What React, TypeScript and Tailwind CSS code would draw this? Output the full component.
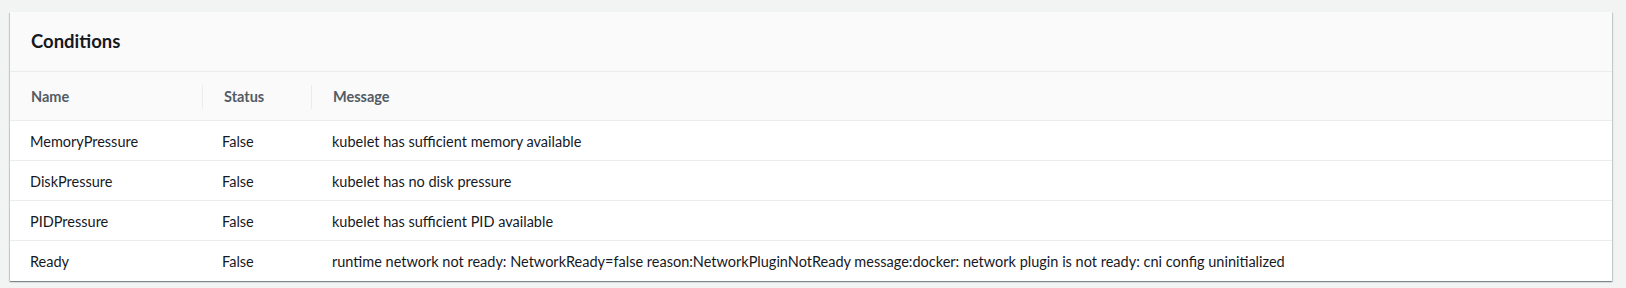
import React from "react";

const rows = [
  { name: "MemoryPressure", status: "False", message: "kubelet has sufficient memory available" },
  { name: "DiskPressure", status: "False", message: "kubelet has no disk pressure" },
  { name: "PIDPressure", status: "False", message: "kubelet has sufficient PID available" },
  {
    name: "Ready",
    status: "False",
    message:
      "runtime network not ready: NetworkReady=false reason:NetworkPluginNotReady message:docker: network plugin is not ready: cni config uninitialized",
  },
];

const App = () => {
  return (
    <div className="w-full h-[288px] bg-[#f2f3f3] pl-[10px] pr-[14px] pt-[12px] font-['Lato',sans-serif] text-[#16191f]">
      <div className="bg-white shadow-[0_1px_1px_0_rgba(0,28,36,0.3),1px_1px_1px_0_rgba(0,28,36,0.15),-1px_1px_1px_0_rgba(0,28,36,0.15)]">
        <div className="h-[60px] bg-[#fafafa] border-b border-[#eaeded] px-[21px] flex items-center">
          <h2 className="text-[18.5px] font-bold leading-none">Conditions</h2>
        </div>
        <div className="grid grid-cols-[192px_109px_1fr] h-[49px] pt-[1px] bg-[#fafafa] border-b border-[#eaeded] items-center text-[14.5px] font-bold text-[#545b64]">
          <div className="pl-[21px]">Name</div>
          <div className="pl-[21px] border-l border-[#eaeded] h-[24px] flex items-center">Status</div>
          <div className="pl-[21px] border-l border-[#eaeded] h-[24px] flex items-center">Message</div>
        </div>
        {rows.map((r, i) => (
          <div
            key={r.name}
            className={`grid grid-cols-[192px_109px_1fr] h-[40px] pt-[2px] items-center text-[14.5px] ${
              i < rows.length - 1 ? "border-b border-[#eaeded]" : ""
            }`}
          >
            <div className="pl-[20px]">{r.name}</div>
            <div className="pl-[20px]">{r.status}</div>
            <div className="pl-[21px]">{r.message}</div>
          </div>
        ))}
      </div>
    </div>
  );
};

export default App;
